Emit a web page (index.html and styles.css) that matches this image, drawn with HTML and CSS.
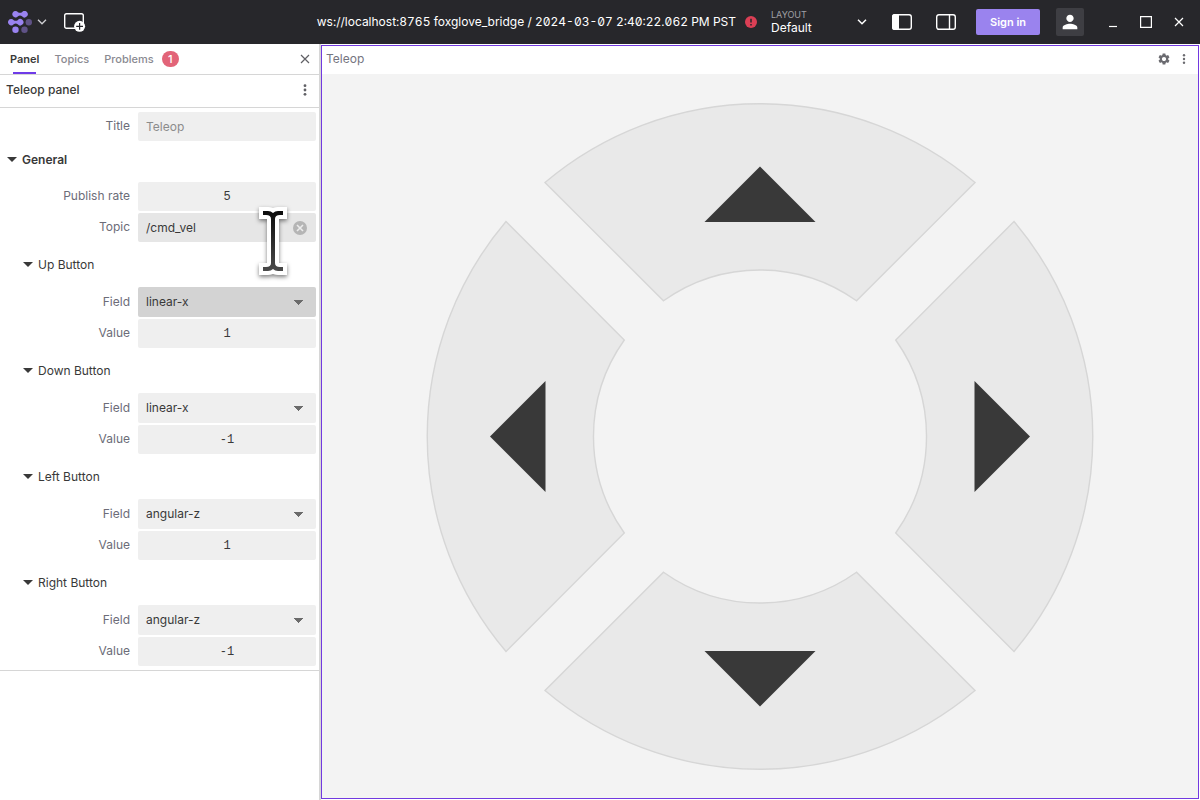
FILE: index.html
```html
<!DOCTYPE html>
<html lang="en">
<head>
<meta charset="utf-8">
<title>Teleop</title>
<link rel="stylesheet" href="styles.css">
</head>
<body>
<header class="topbar">
  <button class="logo-button" aria-label="Main menu">
    <svg width="24" height="22" viewBox="0 0 24 22">
      <g fill="#9a83f0">
        <path d="M7.500 0a3.200 3.200 0 0 1 2.500 1.200q2 1.200 4 0a3.200 3.200 0 1 1 0 4q-2-1.200-4 0a3.200 3.200 0 1 1-2.500-5.200z"/>
        <path d="M3.200 8a3.200 3.200 0 0 1 2.500 1.200q2 1.200 4 0a3.200 3.200 0 1 1 0 4q-2-1.200-4 0a3.200 3.200 0 1 1-2.500-5.200z"/>
        <circle cx="7.500" cy="18.800" r="3.200"/>
      </g>
      <g fill="#5f5286"><circle cx="20.800" cy="11.200" r="3.200"/><circle cx="16.500" cy="18.800" r="3.200"/></g>
    </svg>
    <svg width="10" height="6" viewBox="0 0 10 6" fill="none" stroke="#d0d0d4" stroke-width="1.300"><path d="M1 .8l4 4 4-4"/></svg>
  </button>
  <button class="icon-button" aria-label="Add panel">
    <svg width="22" height="20" viewBox="0 0 22 20">
      <rect x=".7" y="1.700" width="18.600" height="14.600" rx="1.800" fill="none" stroke="#fff" stroke-width="1.400"/>
      <circle cx="15.600" cy="14.300" r="5.500" fill="#fff"/>
      <path d="M15.600 10.900v6.800M12.200 14.300h6.800" stroke="#27272b" stroke-width="1.200"/>
    </svg>
  </button>
  <div class="topbar-end">
    <span class="source">ws://localhost:8765 foxglove_bridge / 2024-03-07 2:40:22.062 PM PST</span>
    <svg class="alert" width="12" height="12" viewBox="0 0 12 12"><circle cx="6" cy="6" r="6" fill="#db3f55"/><path d="M6 2.800v3.600M6 7.900v1.500" stroke="#27272b" stroke-width="1.500"/></svg>
    <button class="layout-menu" aria-haspopup="true">
      <span class="layout-text"><span class="layout-caption">LAYOUT</span><span>Default</span></span>
      <svg width="10" height="6" viewBox="0 0 10 6" fill="none" stroke="#fff" stroke-width="1.500"><path d="M1 .8l4 4 4-4"/></svg>
    </button>
    <div class="sidebar-toggles">
      <button class="icon-button" aria-label="Toggle left sidebar">
        <svg width="20" height="16" viewBox="0 0 20 16"><rect x=".7" y=".7" width="18.600" height="14.600" rx="2.200" fill="none" stroke="#fff" stroke-width="1.400"/><path d="M2.500 0H7v16H2.500A2.500 2.500 0 0 1 0 13.500v-11A2.500 2.500 0 0 1 2.500 0z" fill="#fff"/></svg>
      </button>
      <button class="icon-button" aria-label="Toggle right sidebar">
        <svg width="20" height="16" viewBox="0 0 20 16" fill="none" stroke="#fff" stroke-width="1.400"><rect x=".7" y=".7" width="18.600" height="14.600" rx="2.200"/><path d="M13.500 1v14"/></svg>
      </button>
    </div>
    <button class="sign-in">Sign in</button>
    <button class="avatar" aria-label="Account">
      <svg width="22" height="22" viewBox="0 0 24 24" fill="#fff"><path d="M12 12c2.210 0 4-1.790 4-4s-1.790-4-4-4-4 1.790-4 4 1.790 4 4 4zm0 2c-2.670 0-8 1.340-8 4v2h16v-2c0-2.660-5.330-4-8-4z"/></svg>
    </button>
    <div class="window-controls">
      <button class="icon-button" aria-label="Minimize"><svg width="12" height="12" viewBox="0 0 12 12"><path d="M2 10.500h8" stroke="#fff" stroke-width="1.200"/></svg></button>
      <button class="icon-button" aria-label="Maximize"><svg width="12" height="12" viewBox="0 0 12 12"><path d="M.6.6h10.800v10.800H.6z" fill="none" stroke="#fff" stroke-width="1.200"/></svg></button>
      <button class="icon-button" aria-label="Close"><svg width="12" height="12" viewBox="0 0 12 12"><path d="M2 2l8 8M10 2l-8 8" stroke="#fff" stroke-width="1.200"/></svg></button>
    </div>
  </div>
</header>
<main class="workspace">
  <aside class="sidebar">
    <nav class="tabs" role="tablist">
      <button class="tab tab-active" role="tab" aria-selected="true">Panel</button>
      <button class="tab" role="tab">Topics</button>
      <button class="tab" role="tab">Problems<span class="count">1</span></button>
      <button class="icon-button tabs-close" aria-label="Close sidebar"><svg width="10" height="10" viewBox="0 0 10 10"><path d="M1 1l8 8M9 1l-8 8" stroke="#606065" stroke-width="1.200"/></svg></button>
    </nav>
    <div class="panel-title">
      <h2 class="panel-name">Teleop panel</h2>
      <button class="icon-button" aria-label="Panel actions"><svg width="4" height="12" viewBox="0 0 4 12" fill="#606065"><circle cx="2" cy="1.700" r="1.400"/><circle cx="2" cy="6" r="1.400"/><circle cx="2" cy="10.300" r="1.400"/></svg></button>
    </div>
    <form class="settings">
      <div class="row"><label for="title">Title</label><input id="title" class="control" type="text" placeholder="Teleop"></div>
      <button type="button" class="group group-main"><span class="caret"></span>General</button>
      <div class="row"><label for="rate">Publish rate</label><input id="rate" class="control number" type="text" inputmode="numeric" value="5"></div>
      <div class="row">
        <label for="topic">Topic</label>
        <div class="topic-field">
          <input id="topic" class="control hovered" type="text" value="/cmd_vel">
          <button type="button" class="icon-button clear" aria-label="Clear topic"><svg width="14" height="14" viewBox="0 0 14 14"><circle cx="7" cy="7" r="7" fill="#b5b5b5"/><path d="M4 4l6 6M10 4l-6 6" stroke="#ececec" stroke-width="1.600"/></svg></button>
          <svg class="pointer" width="40" height="82" viewBox="253 201 40 82">
            <defs><linearGradient id="ink" x1="0" y1="0" x2="0" y2="1"><stop offset="0" stop-color="#0c0c0c"/><stop offset="1" stop-color="#4a4a4a"/></linearGradient></defs>
            <path d="M263 211h5q3 0 5 2 2-2 5-2h5v4h-3q-5 0-5 4v44q0 4 5 4h3v4h-5q-3 0-5-2-2 2-5 2h-5v-4h3q5 0 5-4v-44q0-4-5-4h-3z" fill="url(#ink)" stroke="#fff" stroke-width="8" paint-order="stroke"/>
          </svg>
        </div>
      </div>
      <button type="button" class="group"><span class="caret"></span>Up Button</button>
      <div class="row"><label for="up-field">Field</label><select id="up-field" class="control select pressed"><option>linear-x</option></select></div>
      <div class="row"><label for="up-value">Value</label><input id="up-value" class="control number" type="text" inputmode="numeric" value="1"></div>
      <button type="button" class="group"><span class="caret"></span>Down Button</button>
      <div class="row"><label for="down-field">Field</label><select id="down-field" class="control select"><option>linear-x</option></select></div>
      <div class="row"><label for="down-value">Value</label><input id="down-value" class="control number" type="text" inputmode="numeric" value="-1"></div>
      <button type="button" class="group"><span class="caret"></span>Left Button</button>
      <div class="row"><label for="left-field">Field</label><select id="left-field" class="control select"><option>angular-z</option></select></div>
      <div class="row"><label for="left-value">Value</label><input id="left-value" class="control number" type="text" inputmode="numeric" value="1"></div>
      <button type="button" class="group"><span class="caret"></span>Right Button</button>
      <div class="row"><label for="right-field">Field</label><select id="right-field" class="control select"><option>angular-z</option></select></div>
      <div class="row"><label for="right-value">Value</label><input id="right-value" class="control number" type="text" inputmode="numeric" value="-1"></div>
    </form>
  </aside>
  <section class="panel">
    <div class="panel-bar">
      <span>Teleop</span>
      <div class="panel-actions">
        <button class="icon-button" aria-label="Settings"><svg width="14" height="14" viewBox="0 0 24 24" fill="#6b6b70"><path d="M19.140 12.940c.04-.3.06-.61.06-.94 0-.32-.02-.64-.07-.94l2.030-1.580c.18-.14.23-.41.12-.61l-1.920-3.320c-.12-.22-.37-.29-.59-.22l-2.390.96c-.5-.38-1.030-.7-1.620-.94l-.36-2.540c-.04-.24-.24-.41-.48-.41h-3.840c-.24 0-.43.17-.47.41l-.36 2.540c-.59.24-1.130.57-1.620.94l-2.390-.96c-.22-.08-.47 0-.59.22L2.740 8.870c-.12.21-.08.47.12.61l2.030 1.580c-.05.3-.09.63-.09.94s.02.64.07.94l-2.030 1.580c-.18.14-.23.41-.12.61l1.920 3.320c.12.22.37.29.59.22l2.390-.96c.5.38 1.030.7 1.620.94l.36 2.540c.05.24.24.41.48.41h3.840c.24 0 .44-.17.47-.41l.36-2.540c.59-.24 1.130-.56 1.620-.94l2.390.96c.22.08.47 0 .59-.22l1.920-3.320c.12-.22.07-.47-.12-.61l-2.010-1.580zM12 15.600c-1.980 0-3.600-1.620-3.600-3.600s1.620-3.600 3.600-3.600 3.600 1.620 3.600 3.600-1.620 3.600-3.600 3.600z"/></svg></button>
        <button class="icon-button" aria-label="More"><svg width="4" height="10" viewBox="0 0 4 10" fill="#6b6b70"><circle cx="2" cy="1.300" r="1.200"/><circle cx="2" cy="5" r="1.200"/><circle cx="2" cy="8.700" r="1.200"/></svg></button>
      </div>
    </div>
    <div class="pad">
      <svg class="wheel" viewBox="-438 -362.500 876 724">
        <defs>
          <path id="wedge" d="M-215-254A332.800 332.800 0 0 1 215-254L96.500-135.700A166.500 166.500 0 0 0-96.500-135.700z"/>
          <path id="arrow" d="M0-270L55.500-214.500H-55.500z"/>
        </defs>
        <g role="button" aria-label="Up"><use href="#wedge" class="wedge"/><use href="#arrow" class="arrow"/></g>
        <g role="button" aria-label="Right" transform="rotate(90)"><use href="#wedge" class="wedge"/><use href="#arrow" class="arrow"/></g>
        <g role="button" aria-label="Down" transform="rotate(180)"><use href="#wedge" class="wedge"/><use href="#arrow" class="arrow"/></g>
        <g role="button" aria-label="Left" transform="rotate(270)"><use href="#wedge" class="wedge"/><use href="#arrow" class="arrow"/></g>
      </svg>
    </div>
  </section>
</main>
</body>
</html>
```
FILE: styles.css
```css
* { box-sizing: border-box; }
body {
  margin: 0;
  height: 100vh;
  display: flex;
  flex-direction: column;
  background: #fff;
  color: #393939;
  font: 12px/16px Inter, "Liberation Sans", sans-serif;
}
button {
  display: flex;
  align-items: center;
  padding: 0;
  border: 0;
  background: none;
  color: inherit;
  font: inherit;
}
svg { display: block; flex: none; }

/* Top bar */
.topbar {
  display: flex;
  align-items: center;
  flex: none;
  height: 44px;
  padding: 0 15px 0 8px;
  background: #27272b;
  color: #fff;
}
.logo-button { gap: 5px; margin-right: 17px; }
.topbar-end { display: flex; align-items: center; margin-left: auto; }
.source { font-feature-settings: "tnum", "zero"; white-space: nowrap; }
.alert { margin: 0 14px 0 9px; }
.layout-menu { justify-content: space-between; width: 96px; text-align: left; }
.layout-text { display: flex; flex-direction: column; padding-bottom: 2px; line-height: 13px; }
.layout-caption { color: #a0a0a6; font-size: 9px; }
.sidebar-toggles { display: flex; gap: 24px; margin: 0 20px 0 25px; }
.sign-in {
  justify-content: center;
  width: 64px;
  height: 26px;
  border-radius: 2px;
  background: #9a83ee;
  font-size: 11px;
  font-weight: 600;
}
.avatar {
  justify-content: center;
  width: 28px;
  height: 28px;
  margin: 0 23px 0 16px;
  border-radius: 2px;
  background: #3e3e43;
}
.window-controls { display: flex; gap: 21px; }

/* Sidebar */
.workspace { display: flex; flex: 1; min-height: 0; }
.sidebar { flex: none; width: 321px; border-right: 2px solid #d6d6d6; }
.tabs {
  display: flex;
  height: 31px;
  padding: 0 9px 0 10px;
  gap: 15px;
  border-bottom: 1px solid #d6d6d6;
}
.tab { gap: 8px; color: #8a8a91; font-size: 11px; font-weight: 500; }
.tab-active { position: relative; color: #393939; font-weight: 600; }
.tab-active::after {
  content: "";
  position: absolute;
  right: 3px;
  bottom: 0;
  left: 3px;
  height: 2px;
  background: #6f3be8;
}
.count {
  width: 17px;
  height: 16px;
  border-radius: 8px;
  background: #e26478;
  color: #fff;
  text-align: center;
}
.tabs-close { margin-left: auto; }
.panel-title {
  display: flex;
  align-items: center;
  justify-content: space-between;
  height: 33px;
  padding: 0 12px 2px 6px;
  border-bottom: 1px solid #d6d6d6;
}
.panel-name { margin: 0; font-size: 12px; font-weight: 500; }
.settings { padding: 4px 3px 4px 0; border-bottom: 1px solid #d6d6d6; }
.row {
  display: grid;
  grid-template-columns: 130px 1fr;
  column-gap: 8px;
  align-items: center;
}
.row + .row { margin-top: 2px; }
.row label { padding-bottom: 1px; color: #6c6c78; text-align: right; }
.control {
  display: block;
  width: 100%;
  height: 29px;
  padding: 0 8px;
  border: 0;
  border-radius: 2px;
  background-color: #efefef;
  color: #393939;
  font: inherit;
}
.control::placeholder { color: #8c8c8c; }
.number { font-family: "Liberation Mono", monospace; text-align: center; }
.hovered { background-color: #e6e6e6; }
.select {
  height: 30px;
  appearance: none;
  background-image: conic-gradient(from -45deg at 50% 100%, #6b6b6b 90deg, transparent 0);
  background-image: conic-gradient(from -45deg at 50% 100%, #6b6b6b 90deg, transparent 0);
  background-repeat: no-repeat;
  background-position: right 13px center;
  background-size: 9px 5px;
}
.pressed { background-color: #d3d3d3; }
.group { width: 100%; height: 45px; padding-left: 23px; gap: 5px; }
.group-main { height: 41px; padding: 0 0 4px 7px; font-weight: 600; }
.caret {
  border: 5px solid transparent;
  border-top-color: currentColor;
  border-bottom: 0;
}
.topic-field { position: relative; }
.clear { position: absolute; top: 8px; right: 9px; }
.pointer {
  position: absolute;
  top: -12px;
  right: 23px;
  z-index: 1;
  pointer-events: none;
  filter: drop-shadow(0 2px 2px rgba(0, 0, 0, 0.5));
}

/* Teleop panel */
.panel {
  display: flex;
  flex-direction: column;
  flex: 1;
  min-width: 0;
  margin: 1px 1px 1px 0;
  border: 1px solid #7239e0;
}
.panel-bar {
  display: flex;
  align-items: center;
  justify-content: space-between;
  height: 28px;
  padding: 0 12px 2px 4px;
  color: #75757f;
}
.panel-actions { display: flex; align-items: center; gap: 11px; }
.pad { flex: 1; min-height: 0; background: #f3f3f3; }
.wheel { width: 100%; height: 100%; }
.wedge { fill: #e9e9e9; stroke: #d6d6d6; stroke-width: 1.4px; }
.arrow { fill: #393939; }
```
